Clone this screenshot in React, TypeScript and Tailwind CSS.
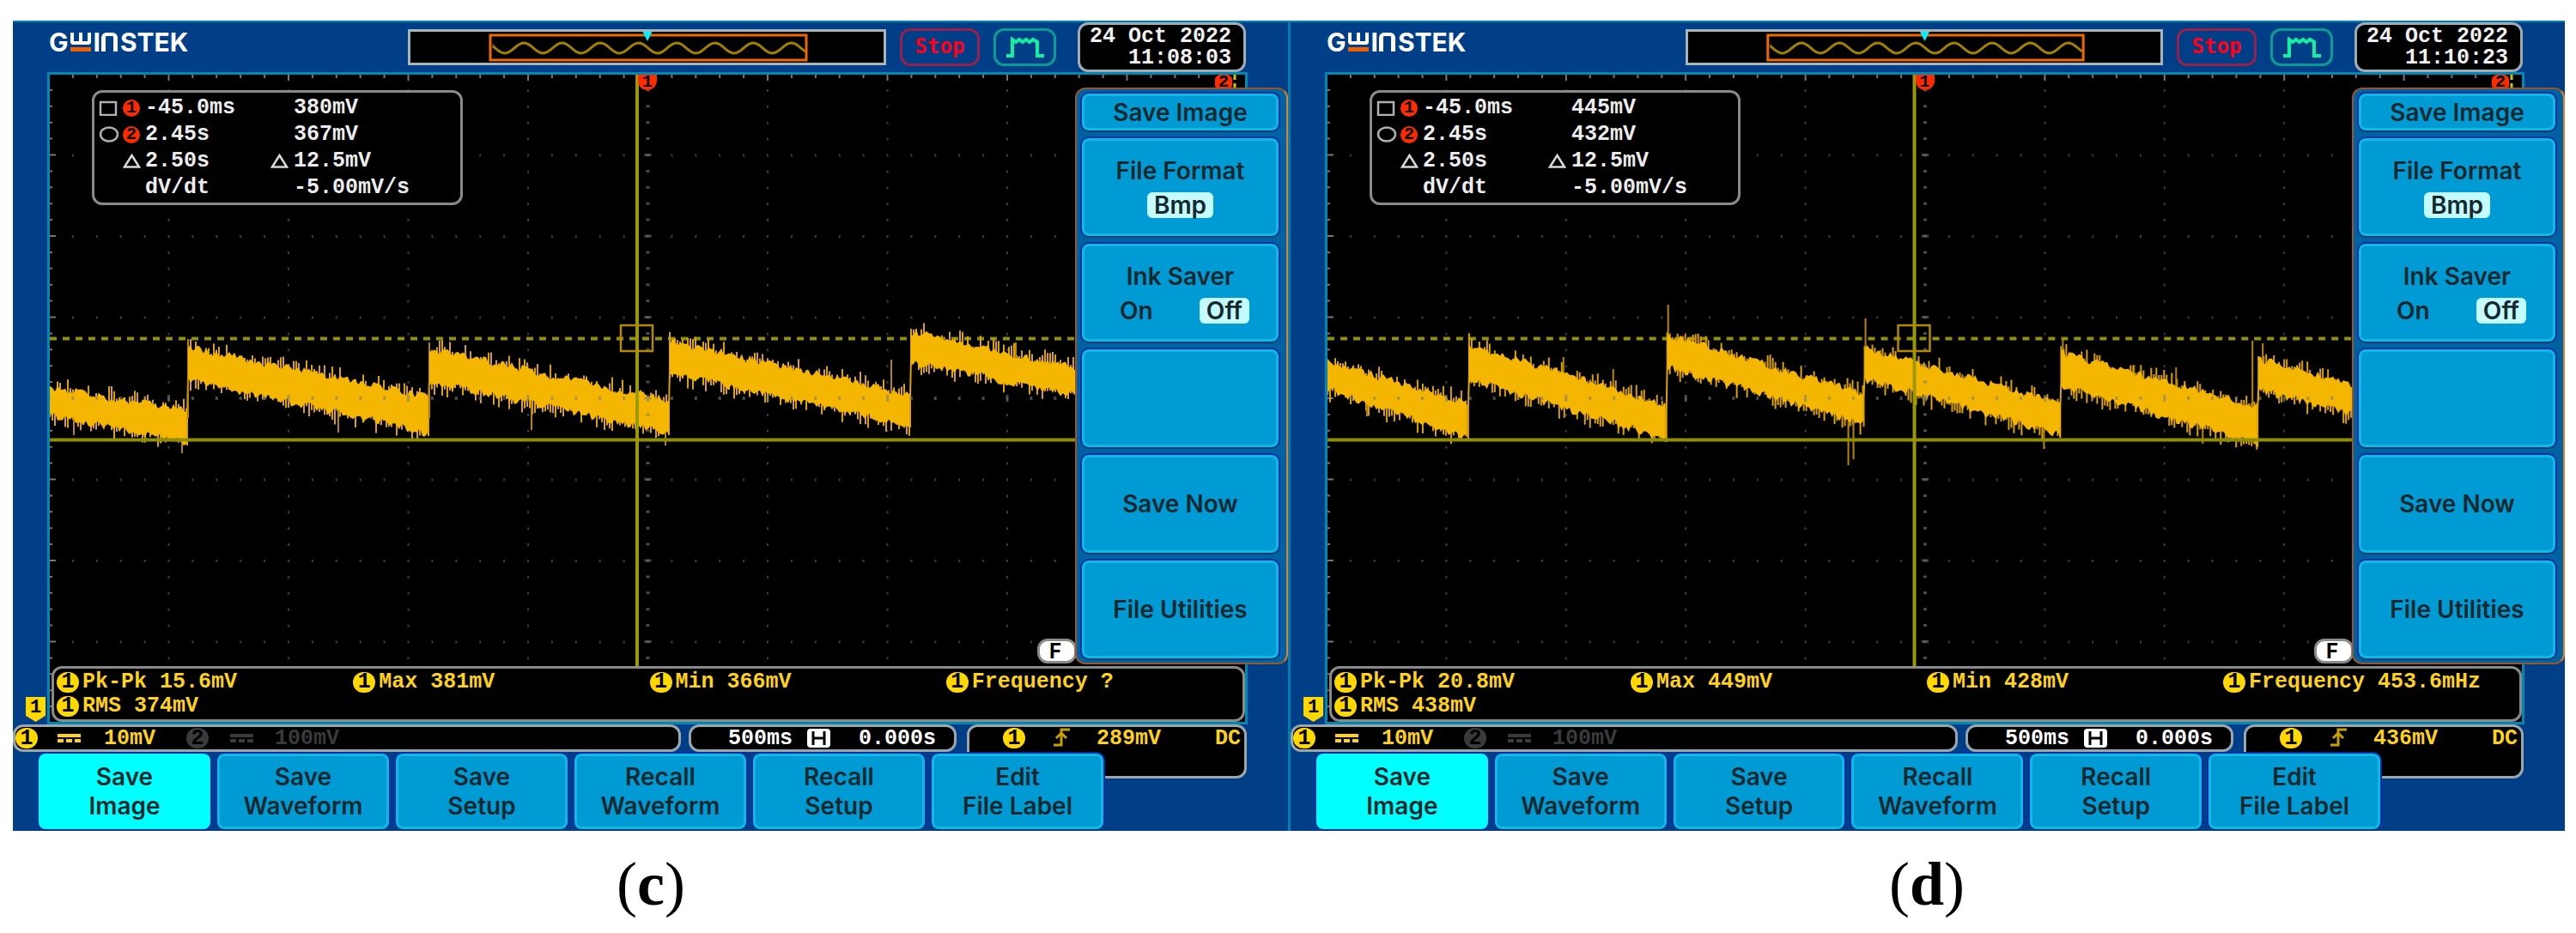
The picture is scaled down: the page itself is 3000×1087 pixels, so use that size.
import React from "react";

interface Segment {
  x0: number;
  x1: number;
  top0: number;
  bottom0: number;
  top1: number;
  bottom1: number;
}

interface Spike {
  x: number;
  from: number;
  to: number;
}

interface Capture {
  label: string;
  time: string;
  cursor1: string;
  cursor2: string;
  pkPk: string;
  max: string;
  min: string;
  frequency: string;
  rms: string;
  trigger: string;
  seed: number;
  segments: Segment[];
  spikes: Spike[];
}

const captures: Capture[] = [
  {
    label: "c",
    time: "11:08:03",
    cursor1: "380mV",
    cursor2: "367mV",
    pkPk: "15.6mV",
    max: "381mV",
    min: "366mV",
    frequency: "?",
    rms: "374mV",
    trigger: "289mV",
    seed: 7,
    segments: [
      { x0: 0, x1: 160, top0: 370, bottom0: 391, top1: 396, bottom1: 424 },
      { x0: 161, x1: 441, top0: 322, bottom0: 350, top1: 381, bottom1: 413 },
      { x0: 442, x1: 721, top0: 324, bottom0: 353, top1: 385, bottom1: 412 },
      { x0: 722, x1: 1002, top0: 316, bottom0: 343, top1: 377, bottom1: 403 },
      { x0: 1003, x1: 1200, top0: 304, bottom0: 330, top1: 348, bottom1: 370 },
    ],
    spikes: [
      { x: 161, from: 308, to: 400 },
      { x: 442, from: 312, to: 400 },
      { x: 28, from: 380, to: 420 },
      { x: 154, from: 420, to: 441 },
      { x: 336, from: 380, to: 417 },
      { x: 561, from: 370, to: 414 },
      { x: 717, from: 400, to: 432 },
      { x: 980, from: 332, to: 385 },
      { x: 1125, from: 312, to: 340 },
    ],
  },
  {
    label: "d",
    time: "11:10:23",
    cursor1: "445mV",
    cursor2: "432mV",
    pkPk: "20.8mV",
    max: "449mV",
    min: "428mV",
    frequency: "453.6mHz",
    rms: "438mV",
    trigger: "436mV",
    seed: 23,
    segments: [
      { x0: 0, x1: 164, top0: 339, bottom0: 362, top1: 388, bottom1: 419 },
      { x0: 165, x1: 395, top0: 320, bottom0: 350, top1: 390, bottom1: 420 },
      { x0: 396, x1: 625, top0: 308, bottom0: 335, top1: 377, bottom1: 402 },
      { x0: 626, x1: 854, top0: 324, bottom0: 350, top1: 388, bottom1: 415 },
      { x0: 855, x1: 1084, top0: 330, bottom0: 357, top1: 391, bottom1: 426 },
      { x0: 1085, x1: 1200, top0: 336, bottom0: 362, top1: 368, bottom1: 392 },
    ],
    spikes: [
      { x: 46, from: 370, to: 398 },
      { x: 275, from: 329, to: 360 },
      { x: 333, from: 343, to: 380 },
      { x: 397, from: 268, to: 340 },
      { x: 607, from: 400, to: 455 },
      { x: 613, from: 400, to: 448 },
      { x: 627, from: 284, to: 340 },
      { x: 835, from: 400, to: 436 },
      { x: 857, from: 308, to: 340 },
      { x: 940, from: 338, to: 360 },
      { x: 989, from: 341, to: 370 },
      { x: 1020, from: 400, to: 430 },
      { x: 1078, from: 310, to: 400 },
      { x: 1090, from: 313, to: 345 },
    ],
  },
];

const VIEW_W = 1392;
const VIEW_H = 754;

// Seeded generator so both traces look the same on every render
function createRandom(seed: number) {
  let state = seed * 7919;
  return () => {
    state = (state * 1664525 + 1013904223) % 4294967296;
    return state / 4294967296;
  };
}

function buildTrace(capture: Capture) {
  const random = createRandom(capture.seed);
  let core = "";
  let noise = "";

  capture.segments.forEach((s, index) => {
    const next = capture.segments[index + 1];
    const tops: string[] = [];
    const bottoms: string[] = [];

    for (let x = s.x0; x <= s.x1; x += 3) {
      const t = (x - s.x0) / (s.x1 - s.x0);
      const top = s.top0 + (s.top1 - s.top0) * t;
      const bottom = s.bottom0 + (s.bottom1 - s.bottom0) * t;
      tops.push(`${x} ${(top - random() * 10).toFixed(1)}`);
      bottoms.unshift(`${x} ${(bottom + random() * 10).toFixed(1)}`);
      const up = 2 + Math.pow(random(), 2) * 17;
      const down = 2 + Math.pow(random(), 2) * 17;
      noise += `M${x} ${(top - up).toFixed(1)}V${(bottom + down).toFixed(1)}`;
    }
    core += `M${tops.join("L")}L${bottoms.join("L")}Z`;

    if (next) {
      noise += `M${s.x1} ${s.bottom1 + 8}V${s.top1}L${next.x0} ${next.bottom0}V${next.top0 - 8}`;
    }
  });

  const spikes = capture.spikes.map((p) => `M${p.x} ${p.from}V${p.to}`).join("");
  return { core, noise, spikes };
}

function buildGraticule() {
  let dots = "";
  let axis = "";
  let edge = "";
  for (let col = 0; col <= 50; col++) {
    const x = (-1 + col * 27.9).toFixed(1);
    const major = col % 5 === 0;
    edge += `M${x} 0v${major ? 7 : 4}M${x} ${VIEW_H}v-${major ? 7 : 4}`;
    for (let row = 1; row < 8; row++) {
      const y = -1 + row * 94.5;
      if (row === 4) axis += `M${x} ${y - (major ? 4 : 2)}v${major ? 8 : 4}`;
      else dots += `M${x} ${y - 1}v3`;
    }
  }
  for (let row = 1; row < 40; row++) {
    const y = -1 + row * 18.9;
    const major = row % 5 === 0;
    edge += `M0 ${y.toFixed(1)}h${major ? 7 : 3}M${VIEW_W} ${y.toFixed(1)}h-${major ? 7 : 3}`;
    for (let col = 1; col < 10; col++) {
      const x = -1 + col * 139.5;
      if (col === 5) axis += `M${x - (major ? 4 : 2)} ${y.toFixed(1)}h${major ? 8 : 4}`;
      else dots += `M${x} ${(y - 1).toFixed(1)}v3`;
    }
  }
  return { dots, axis, edge };
}

const graticule = buildGraticule();

const Logo: React.FC = () => (
  <div
    role="img"
    aria-label="GW Instek"
    className="flex h-[24px] items-start font-['Inter'] text-[30px] leading-[24px] font-bold text-white"
  >
    <span>G</span>
    {/* Squared W sitting on the orange bar */}
    <span className="mt-px ml-[2px] flex w-[24px] flex-col gap-[3px]">
      <span className="flex h-[14px] justify-center rounded-b-sm border-x-4 border-b-4 border-white">
        <span className="h-full w-[4px] bg-white" />
      </span>
      <span className="h-[5px] bg-[#f06000]" />
    </span>
    <span className="ml-[3px]">I</span>
    <span className="mt-px mr-[3px] ml-px h-[22px] w-[19px] rounded-t-md border-x-5 border-t-4 border-white" />
    <span>STEK</span>
  </div>
);

const MemoryBar: React.FC = () => {
  let wave = "M97 19";
  for (let x = 97; x <= 461; x += 3) {
    wave += `L${x} ${(19 - 6 * Math.sin(((x - 121) / 44.5) * Math.PI * 2)).toFixed(1)}`;
  }
  return (
    <div className="h-[42px] flex-1 border-3 border-[#a9b4ba] bg-black">
      <svg viewBox="0 0 551 36" preserveAspectRatio="none" className="block h-full w-full">
        <path d={wave} fill="none" stroke="#a08000" strokeWidth="3" />
        <rect x="93" y="4" width="368" height="29" fill="none" stroke="#f06800" strokeWidth="3" />
        <path d="M270 -1h12l-6 12z" fill="#00f0ff" />
      </svg>
    </div>
  );
};

const ChannelBadge: React.FC<{ n: string; off?: boolean }> = ({ n, off }) => (
  <span
    className={
      off
        ? "flex h-[24px] w-[26px] items-center justify-center rounded-full bg-[#3a3a3a] text-black"
        : "flex h-[24px] w-[26px] items-center justify-center rounded-full bg-[#ffd800] text-black"
    }
  >
    {n}
  </span>
);

const Coupling: React.FC = () => (
  <svg viewBox="0 0 27 10" className="h-[10px] w-[27px]" fill="none" stroke="currentColor" strokeWidth="4">
    <path d="M0 2h27" />
    <path d="M0 8h27" strokeDasharray="7 3" />
  </svg>
);

const Triangle: React.FC = () => (
  <svg viewBox="0 0 21 17" className="h-[17px] w-[21px]" fill="none" stroke="#d8d8d8" strokeWidth="2.500">
    <path d="M10.500 2L19 15.500H2z" />
  </svg>
);

const CursorReadout: React.FC<{ capture: Capture }> = ({ capture }) => (
  <div className="absolute top-[18px] left-[49px] grid w-[432px] grid-cols-[28px_26px_146px_27px_1fr] items-center rounded-xl border-3 border-[#8a8a8a] bg-black py-[2px] pl-[5px] text-[25px] leading-[31px] text-[#ececec]">
    <svg viewBox="0 0 22 18" className="h-[18px] w-[22px]" fill="none" stroke="#b0b0b0" strokeWidth="2.500">
      <rect x="2" y="2" width="18" height="15" />
    </svg>
    <span className="flex h-[20px] w-[20px] items-center justify-center rounded-full bg-[#ff2a00] text-xl text-black">1</span>
    <span>-45.0ms</span>
    <span />
    <span>{capture.cursor1}</span>

    <svg viewBox="0 0 24 19" className="h-[19px] w-[24px]" fill="none" stroke="#b0b0b0" strokeWidth="2.500">
      <ellipse cx="12" cy="9.500" rx="10" ry="8" />
    </svg>
    <span className="flex h-[20px] w-[20px] items-center justify-center rounded-full bg-[#ff2a00] text-xl text-black">2</span>
    <span>2.45s</span>
    <span />
    <span>{capture.cursor2}</span>

    <span />
    <Triangle />
    <span>2.50s</span>
    <Triangle />
    <span>12.5mV</span>

    <span />
    <span />
    <span>dV/dt</span>
    <span />
    <span>-5.00mV/s</span>
  </div>
);

const Measurement: React.FC<{ name: string; value: string }> = ({ name, value }) => (
  <div className="flex items-center gap-1">
    <ChannelBadge n="1" />
    <span>
      {name} {value}
    </span>
  </div>
);

const Screen: React.FC<{ capture: Capture }> = ({ capture }) => {
  const trace = buildTrace(capture);
  return (
    <div className="relative mr-[47px] ml-[40px] flex h-[760px] flex-col justify-end border-3 border-[#0088b4] bg-black">
      <svg
        viewBox={`0 0 ${VIEW_W} ${VIEW_H}`}
        preserveAspectRatio="none"
        className="absolute inset-0 h-full w-full"
        fill="none"
      >
        <path d={graticule.edge} stroke="#777777" strokeWidth="2" />
        <path d={graticule.dots} stroke="#3c3c3c" strokeWidth="2" />
        <path d="M0 307.500H1392" stroke="#8f9010" strokeWidth="4" strokeDasharray="8 7" />
        <path d={trace.noise} stroke="#dca200" strokeWidth="2" />
        <path d={trace.spikes} stroke="#b88600" strokeWidth="2" />
        <path d={trace.core} fill="#f4b600" />
        <path d={graticule.axis} stroke="#7d7d7d" strokeWidth="3" opacity="0.6" />
        <path d="M0 425.500H1392" stroke="#8f8f00" strokeWidth="4" />
        <path d="M684 0V690" stroke="#9a9a00" strokeWidth="4" />
        <rect x="665" y="292" width="37" height="30" stroke="#b58a00" strokeWidth="2.500" />
        <path d="M1380 0V20" stroke="#c8c800" strokeWidth="3" strokeDasharray="6 4" />
      </svg>

      <CursorReadout capture={capture} />

      {/* Cursor markers on the top edge */}
      <span className="absolute top-0 left-1/2 flex h-[18px] w-[22px] -translate-x-1/2 items-center justify-center rounded-b-full bg-[#ff2a00] text-xl text-black">
        1
      </span>
      <span className="absolute top-0 right-[15px] flex h-[18px] w-[20px] items-center justify-center rounded-md bg-[#ff2a00] text-xl text-black">
        2
      </span>

      {/* Channel ground marker in the left bezel */}
      <span className="absolute bottom-0 -left-[28px] flex h-[29px] w-[23px] items-center justify-center bg-[#ffd800] pb-1 text-[22px] text-black [clip-path:polygon(0_0,100%_0,100%_75%,50%_100%,0_75%)]">
        1
      </span>

      <span className="absolute right-[196px] bottom-[68px] flex h-[29px] w-[46px] items-center justify-center rounded-xl border-3 border-[#8a8a8a] bg-white pr-1 font-['Inter'] text-[24px] text-black">
        F
      </span>

      <div className="relative ml-[2px] grid h-[65px] grid-cols-4 content-start rounded-xl border-3 border-[#8a8a8a] bg-black pt-[2px] pl-[3px] text-[25px] leading-[28px] text-[#ffd21a]">
        <Measurement name="Pk-Pk" value={capture.pkPk} />
        <Measurement name="Max" value={capture.max} />
        <Measurement name="Min" value={capture.min} />
        <Measurement name="Frequency" value={capture.frequency} />
        <Measurement name="RMS" value={capture.rms} />
      </div>
    </div>
  );
};

const StatusRow: React.FC<{ capture: Capture }> = ({ capture }) => (
  <div className="mr-[48px] flex h-[32px] items-start text-[25px] leading-[25px] text-[#ffd21a]">
    <div className="flex h-[32px] flex-1 items-center rounded-xl border-3 border-[#9aa6ac] bg-black">
      <ChannelBadge n="1" />
      <span className="ml-[23px] flex items-center gap-[27px]">
        <Coupling />
        10mV
      </span>
      <span className="ml-[36px] flex items-center gap-[25px] text-[#3a3a3a]">
        <ChannelBadge n="2" off />
        <Coupling />
        <span>100mV</span>
      </span>
    </div>
    <div className="ml-[9px] flex h-[32px] w-[312px] items-center rounded-xl border-3 border-[#9aa6ac] bg-black pl-[43px] text-white">
      <span>500ms</span>
      <svg viewBox="0 0 27 22" className="mr-[33px] ml-[17px] h-[22px] w-[27px]">
        <rect width="27" height="22" rx="4" fill="#ffffff" />
        <path d="M7 3v16M20 3v16M7 11h13" stroke="#000000" strokeWidth="3" />
      </svg>
      <span>0.000s</span>
    </div>
    <div className="ml-[12px] flex h-[63px] w-[326px] items-start rounded-xl border-3 border-[#9aa6ac] bg-black pt-[1px] pr-[4px] pl-[39px]">
      <ChannelBadge n="1" />
      <svg viewBox="0 0 20 22" className="ml-[33px] h-[22px] w-[20px]" fill="none" stroke="#c8a000" strokeWidth="3">
        <path d="M0 20h9V2h10M3 12l6-6 6 6" />
      </svg>
      <span className="ml-[30px]">{capture.trigger}</span>
      <span className="ml-auto">DC</span>
    </div>
  </div>
);

const keyClass =
  "flex flex-col items-center justify-center rounded-[10px] border-2 border-[#0030a8] border-b-[#003c78] bg-[#009bd5] text-[28px] leading-[34px] font-semibold text-[#14282e] shadow-[inset_0_0_0_3px_#10b8e4]";

const SideMenu: React.FC = () => (
  <div className="absolute top-[76px] right-0 flex w-[248px] flex-col gap-[5px] rounded-xl border-2 border-[#9a5528] border-r-[#e87c28] bg-[#0062a0] py-[3px] pr-[7px] pl-[4px] font-['Inter']">
    <button className={`${keyClass} h-[47px]`}>Save Image</button>
    <button className={`${keyClass} h-[118px]`}>
      <span>File Format</span>
      <span className="mt-[8px] rounded-md bg-[#c4fbff] px-[8px] leading-[30px]">Bmp</span>
    </button>
    <button className={`${keyClass} h-[118px]`}>
      <span>Ink Saver</span>
      <span className="mt-[8px] flex w-full items-center justify-between pr-[34px] pl-[44px] leading-[30px]">
        <span>On</span>
        <span className="rounded-md bg-[#c4fbff] px-[8px]">Off</span>
      </span>
    </button>
    <button className={`${keyClass} h-[118px]`} disabled aria-label="Unused" />
    <button className={`${keyClass} h-[118px]`}>Save Now</button>
    <button className={`${keyClass} h-[118px]`}>File Utilities</button>
  </div>
);

const bottomKeys = [
  ["Save", "Image"],
  ["Save", "Waveform"],
  ["Save", "Setup"],
  ["Recall", "Waveform"],
  ["Recall", "Setup"],
  ["Edit", "File Label"],
];

const BottomMenu: React.FC = () => (
  <div className="relative mr-[213px] ml-[28px] grid h-[92px] grid-cols-6 gap-[4px] font-['Inter']">
    {bottomKeys.map((lines, index) => (
      <button
        key={index}
        className={
          index === 0
            ? "flex flex-col items-center justify-center rounded-[10px] border-2 border-[#0030a8] bg-[#00ffff] text-[28px] leading-[34px] font-semibold text-[#14282e]"
            : keyClass
        }
      >
        <span>{lines[0]}</span>
        <span>{lines[1]}</span>
      </button>
    ))}
  </div>
);

const Scope: React.FC<{ capture: Capture }> = ({ capture }) => (
  <figure className="group">
    <div className="relative border-t-2 border-[#0080b0] bg-[#003f87] font-['Liberation_Mono',monospace] font-bold group-first:border-r group-last:border-l-2">
      <div className="flex h-[58px] items-center pr-[49px]">
        <div className="-mt-[13px] w-[460px] pl-[42px]">
          <Logo />
        </div>
        <MemoryBar />
        <button className="ml-[16px] h-[44px] w-[93px] rounded-xl border-3 border-[#98204c] pb-1 font-['DejaVu_Sans_Mono'] text-[24px] text-[#ff0018]">
          Stop
        </button>
        <div className="ml-[16px] flex h-[44px] w-[73px] items-center justify-center rounded-xl border-3 border-[#0a9c94]">
          <svg viewBox="0 0 44 24" className="h-[24px] w-[44px]" fill="none" stroke="#10f0a0" strokeWidth="4">
            <path d="M0 22h7V3l4 3 4-3 4 3 4-3 4 3 4-3 5 3v16h8" />
          </svg>
        </div>
        <div className="ml-[25px] flex h-[58px] w-[196px] flex-col items-end justify-center rounded-xl border-3 border-[#a0acb4] bg-black pr-[14px] text-[25px] leading-[25px] text-[#f0f0f0]">
          <span>24 Oct 2022</span>
          <span>{capture.time}</span>
        </div>
      </div>
      <Screen capture={capture} />
      <StatusRow capture={capture} />
      <BottomMenu />
      <SideMenu />
    </div>
    <figcaption className="mt-[22px] text-center font-['Liberation_Serif',serif] text-[72px] leading-[80px] text-black">
      (<b>{capture.label}</b>)
    </figcaption>
  </figure>
);

const App: React.FC = () => {
  return (
    <main className="bg-white pt-[24px] pr-[13px] pl-[15px]">
      <div className="grid grid-cols-2">
        {captures.map((capture) => (
          <Scope key={capture.label} capture={capture} />
        ))}
      </div>
    </main>
  );
};

export default App;
